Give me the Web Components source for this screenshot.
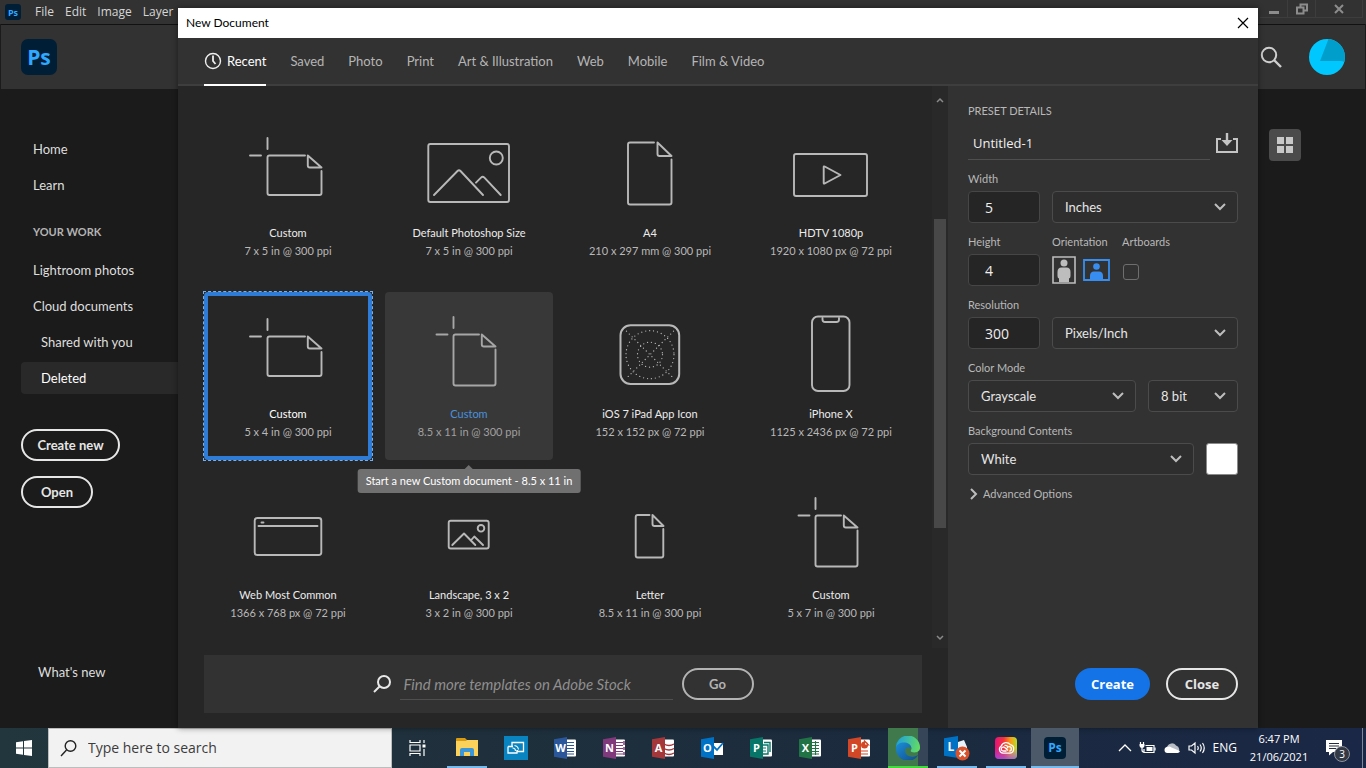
<!DOCTYPE html>
<html lang="en">
<head>
<meta charset="utf-8">
<title>New Document</title>
<style>
html, body { margin: 0; height: 100%; }
body { background: #1b1b1b; font-family: Lato, "Open Sans", sans-serif; overflow: hidden; }
</style>
</head>
<body>
<desktop-screen>
  <home-window>
    <menu-bar slot="menu"></menu-bar>
  </home-window>
  <new-document-dialog slot="dialog"></new-document-dialog>
  <task-bar slot="taskbar"></task-bar>
</desktop-screen>

<script>
const define = (name, html, setup) => {
  const template = document.createElement('template');
  template.innerHTML = html;
  customElements.define(name, class extends HTMLElement {
    connectedCallback() {
      if (this.shadowRoot) return;
      const root = this.attachShadow({ mode: 'open' });
      root.append(template.content.cloneNode(true));
      if (setup) setup(root, this);
    }
  });
};

/* ---------- small shared parts ---------- */

define('ps-logo', `
<style>
  :host { display: grid; place-items: center; flex: none; width: 36px; height: 36px; border-radius: 7px;
    background: #001e36; color: #31a8ff; font: 700 21px/1 "Open Sans", sans-serif; }
  :host([small]) { width: 16px; height: 16px; border-radius: 3px; font-size: 9px; }
  :host([medium]) { width: 22px; height: 22px; border-radius: 4px; font-size: 12px; }
</style>
<span>Ps</span>`);

define('pill-button', `
<style>
  :host { display: inline-block; flex: none; }
  button { box-sizing: border-box; width: 100%; height: 32px; padding: 0 14px; border: 2px solid #e6e6e6; border-radius: 16px;
    background: transparent; color: #e6e6e6; font: 700 13px/16px Lato, sans-serif; }
  :host([wide]) button { font-family: "Open Sans", sans-serif; }
  :host([primary]) button { border-color: #1473e6; background: #1473e6; color: #fff; }
  :host([quiet]) button { border-color: #b3b3b3; color: #b3b3b3; }
</style>
<button type="button"><slot></slot></button>`);

/* ---------- desktop ---------- */

define('desktop-screen', `
<style>
  :host { display: grid; grid-template-rows: minmax(0, 1fr) 40px; height: 100vh; }
  .stage { position: relative; display: grid; min-height: 0; }
  .dialog { position: absolute; inset: 8px 108px 0 178px; display: grid; }
  .stage, .dialog { grid-template-columns: minmax(0, 1fr); grid-template-rows: minmax(0, 1fr); }
</style>
<div class="stage">
  <slot></slot>
  <div class="dialog"><slot name="dialog"></slot></div>
</div>
<slot name="taskbar"></slot>`);

/* ---------- Photoshop window behind the dialog ---------- */

define('menu-bar', `
<style>
  :host { display: flex; justify-content: space-between; height: 24px; background: #323232; }
  nav { display: flex; align-items: center; gap: 11px; padding-left: 5px; }
  ps-logo { margin-right: 3px; }
  button { padding: 0; border: 0; background: none; color: #d6d6d6; font: 12px/16px "Open Sans", sans-serif; }
  .controls { display: flex; height: 18px; padding-right: 3px; }
  .controls button { display: grid; place-items: center; box-sizing: border-box; width: 28px; border: 1px solid #3d3d3d; border-width: 0 1px 1px 0; }
  .controls .close { width: 47px; }
  svg { fill: none; stroke: #8c8c8c; stroke-width: 2; }
</style>
<nav aria-label="Menu">
  <ps-logo small></ps-logo>
  <button>File</button><button>Edit</button><button>Image</button><button>Layer</button>
</nav>
<div class="controls">
  <button aria-label="Minimise"><svg width="12" height="12"><path d="M1 9.500h10" stroke-width="3"/></svg></button>
  <button aria-label="Restore"><svg width="12" height="12"><path d="M4.500 4V1.500h6.500v6H8.500M1 4.500h6.500v6H1z"/></svg></button>
  <button class="close" aria-label="Close"><svg width="12" height="12"><path d="M2 2l8 8M10 2l-8 8"/></svg></button>
</div>`);

define('home-window', `
<style>
  :host { display: flex; flex-direction: column; min-height: 0; background: #1b1b1b; }
  header { display: flex; align-items: center; justify-content: space-between; box-sizing: border-box; height: 65px;
    margin: 0 1px; padding: 0 20px; border-top: 1px solid #111; background: #323232; }
  .tools { display: flex; align-items: center; gap: 27px; }
  .tools button, .view { padding: 0; border: 0; background: none; display: grid; place-items: center; }
  .body { flex: 1; display: flex; justify-content: space-between; min-height: 0; }
  aside { display: flex; flex-direction: column; align-items: flex-start; box-sizing: border-box; width: 200px; padding: 44px 0 40px 21px; }
  nav { display: flex; flex-direction: column; gap: 4px; align-self: stretch; margin-bottom: 35px; }
  a { display: block; padding: 0 12px; border-radius: 4px; color: #dedede; font-size: 13px; line-height: 32px; text-decoration: none; }
  a.sub { padding-left: 20px; }
  a.on { background: #292929; color: #fff; }
  h2 { margin: 17px 0 8px; padding-left: 12px; color: #b4b4b4; font-size: 11px; line-height: 20px; font-weight: 700; }
  .new { width: 99px; margin-bottom: 15px; }
  .open { width: 72px; }
  .news { margin-top: auto; padding-left: 17px; }
  .view { width: 32px; height: 32px; margin: 40px 65px 0 0; border-radius: 4px; background: #4b4b4b; }
</style>
<slot name="menu"></slot>
<header>
  <ps-logo></ps-logo>
  <div class="tools">
    <button aria-label="Search"><svg width="22" height="22" fill="none" stroke="#cfcfcf" stroke-width="2"><circle cx="9" cy="9" r="7.200"/><path d="M14 14l7 7" stroke-width="2.400"/></svg></button>
    <button aria-label="Account"><svg width="36" height="36" viewBox="0 0 36 36"><circle cx="18" cy="18" r="18" fill="#00c8ff"/><path d="M19.500 0A18 18 0 0 1 35.200 23Q34 22 31 22H11z" fill="#009fcb"/></svg></button>
  </div>
</header>
<div class="body">
  <aside>
    <nav aria-label="Home">
      <a href="#home">Home</a><a href="#learn">Learn</a>
      <h2>YOUR WORK</h2>
      <a href="#lightroom">Lightroom photos</a><a href="#cloud">Cloud documents</a>
      <a href="#shared" class="sub">Shared with you</a><a href="#deleted" class="sub on">Deleted</a>
    </nav>
    <pill-button class="new">Create new</pill-button>
    <pill-button class="open">Open</pill-button>
    <a href="#news" class="news">What's new</a>
  </aside>
  <button class="view" aria-label="Grid view"><svg width="16" height="16" fill="#c8c8c8"><path d="M0 0h7v7H0zM9 0h7v7H9zM0 9h7v7H0zM9 9h7v7H9z"/></svg></button>
</div>`);

/* ---------- dialog ---------- */

define('new-document-dialog', `
<style>
  :host { display: flex; flex-direction: column; min-height: 0; background: #262626; box-shadow: 0 0 6px rgba(0,0,0,.45); }
  .title { display: flex; align-items: center; justify-content: space-between; flex: none; height: 30px; padding: 0 8px; background: #fff; color: #000; }
  h1 { margin: 0; font-size: 12px; line-height: 16px; font-weight: 400; }
  .title button { display: grid; place-items: center; padding: 0; border: 0; background: none; }
  .content { flex: 1; display: grid; grid-template-columns: minmax(0, 1fr) 310px; min-height: 0; }
  .left { display: flex; flex-direction: column; min-height: 0; }
</style>
<div class="title"><h1>New Document</h1>
  <button aria-label="Close dialog"><svg width="14" height="14" fill="none" stroke="#000" stroke-width="1.200"><path d="M2 2l10 10M12 2L2 12"/></svg></button></div>
<category-tabs></category-tabs>
<div class="content">
  <div class="left">
    <preset-list></preset-list>
    <stock-search></stock-search>
  </div>
  <preset-details></preset-details>
</div>`);

define('category-tabs', `
<style>
  :host { display: flex; gap: 24px; box-sizing: border-box; flex: none; height: 48px; padding: 0 26px; background: #323232;
    box-shadow: inset 0 -2px #3e3e3e; }
  button { display: flex; align-items: center; gap: 5px; padding: 0; border: 0; border-bottom: 2px solid transparent; background: none;
    color: #b5b5b5; font: 13px/18px Lato, sans-serif; white-space: nowrap; }
  button[aria-selected=true] { border-color: #fff; color: #fff; }
</style>
<button role="tab" aria-selected="true"><svg width="18" height="18" fill="none" stroke="#eee" stroke-width="1.400"><circle cx="9" cy="9" r="7.500"/><path d="M9 3.500V9l2.500 3" stroke-width="1.800"/></svg>Recent</button>
<button role="tab">Saved</button><button role="tab">Photo</button><button role="tab">Print</button>
<button role="tab">Art &amp; Illustration</button><button role="tab">Web</button><button role="tab">Mobile</button><button role="tab">Film &amp; Video</button>`);

const PICTOGRAMS = {
  'crop-wide': '<path d="M29.500 9v11M12 26.500h11M67 26.500H31.500q-2 0-2 2v35.500q0 2 2 2h50q2 0 2-2V42M69.800 26.500v10q0 2 2 2H83.500z"/>',
  'crop-tall': '<path d="M34.500 7v11M17.500 24.500h11M60 24.500H36.500q-2 0-2 2v47q0 2 2 2h38q2 0 2-2V39.500M62.800 24.500v10q0 2 2 2H76.500z"/>',
  picture: '<rect x="9.300" y="15" width="80.700" height="58" rx="2"/><circle cx="77.300" cy="29" r="6.500"/><path d="M15 66l23.500-24q1.500-1.500 3 0L64 66M57 53.700l5-5q1.700-1.700 3.400 0L81.700 66"/>',
  page: '<path d="M54 13.500H30q-2 0-2 2v58q0 2 2 2h39.500q2 0 2-2V30.500M57.500 13.500v11.500q0 2 2 2h12z"/>',
  video: '<rect x="13" y="25" width="73" height="42" rx="2"/><path d="M42.700 38v16q0 1 1 .5L59.500 46 43.700 37.500q-1-.5-1 .5z"/>',
  appicon: '<rect x="20.500" y="15.300" width="58.700" height="58.700" rx="10" stroke-width="2"/><g stroke-width="1.300" stroke-dasharray="0 4"><circle cx="50" cy="44.700" r="24"/><circle cx="50" cy="44.700" r="12.500"/><path d="M26.500 21.200l47 47M73.500 21.200l-47 47"/></g>',
  phone: '<rect x="31" y="6.500" width="37.500" height="74.500" rx="6"/><path d="M41.500 8v1.500q0 2.500 2.500 2.500h11.500q2.500 0 2.500-2.500V8"/>',
  browser: '<rect x="16.700" y="27" width="66.600" height="37" rx="2.500"/><path d="M20.500 35h59M23.500 31.500h2"/>',
  'picture-small': '<rect x="29.700" y="29.700" width="40" height="27.800" rx="2"/><circle cx="62" cy="37.300" r="3.300"/><path d="M33.300 54L45 42.500 56.300 54M52.700 48.500l2.600-3L64 54"/>',
  'page-small': '<path d="M49.500 24H37.700q-2 0-2 2v38.500q0 2 2 2h23.600q2 0 2-2V38M52.500 24v9q0 2 2 2h9z"/>'
};

define('preset-tile', `
<style>
  :host { display: block; position: relative; }
  button { display: flex; flex-direction: column; align-items: center; box-sizing: border-box; width: 100%; aspect-ratio: 1; padding: 18px 0 0;
    border: 0; border-radius: 4px; background: none; color: #b8b8b8; font: 11px/18px Lato, sans-serif; }
  svg { display: block; flex: none; width: 100px; height: 92px; margin-bottom: 3px; fill: none; stroke: #b8b8b8; stroke-width: 1.900; stroke-linecap: round; stroke-linejoin: round; }
  .name { color: #ececec; }
  :host([selected]) { outline: 1px dashed #79aee8; }
  :host([selected]) button { border: 4px solid #2e7cd6; padding-top: 14px; }
  :host([selected]) .name { color: #fff; }
  :host([hovered]) button { background: #383838; color: #a0a0a0; }
  :host([hovered]) svg { stroke: #a6a6a6; }
  :host([hovered]) .name { color: #4a90dc; }
  ::slotted([slot=tip]) { position: absolute; z-index: 1; top: calc(100% + 9px); left: 50%; transform: translateX(-50%); }
</style>
<button type="button"><svg viewBox="0 0 100 92" aria-hidden="true"></svg><span class="name"><slot name="name"></slot></span><span><slot></slot></span></button>
<slot name="tip"></slot>`,
(root, host) => { root.querySelector('svg').innerHTML = PICTOGRAMS[host.getAttribute('icon')]; });

define('tool-tip', `
<style>
  :host { display: block; padding: 0 8px; border-radius: 3px; background: #707070; color: #fff; font-size: 11px; line-height: 24px; white-space: nowrap; }
  :host::before { content: ""; position: absolute; left: 50%; bottom: 100%; margin-left: -4px; border: 4px solid transparent; border-top: 0; border-bottom-color: #707070; }
</style>
<slot></slot>`);

define('preset-list', `
<style>
  :host { flex: 1; display: grid; grid-template-columns: minmax(0, 1fr) 16px; min-height: 0; }
  .grid { display: grid; grid-template-columns: repeat(4, minmax(0, 1fr)); gap: 13px; align-content: start; padding: 25px 17px 0 26px; }
  .scroll { display: grid; grid-template-rows: 20px 109fr 309fr 100fr 20px; justify-items: center; background: #292929; padding-top: 4px; }
  .thumb { grid-row: 3; width: 12px; background: #484848; }
  svg { fill: none; stroke: #8a8a8a; stroke-width: 1.500; align-self: center; }
  svg:last-child { grid-row: 5; }
</style>
<div class="grid">
  <preset-tile icon="crop-wide"><span slot="name">Custom</span>7 x 5 in @ 300 ppi</preset-tile>
  <preset-tile icon="picture"><span slot="name">Default Photoshop Size</span>7 x 5 in @ 300 ppi</preset-tile>
  <preset-tile icon="page"><span slot="name">A4</span>210 x 297 mm @ 300 ppi</preset-tile>
  <preset-tile icon="video"><span slot="name">HDTV 1080p</span>1920 x 1080 px @ 72 ppi</preset-tile>
  <preset-tile icon="crop-wide" selected><span slot="name">Custom</span>5 x 4 in @ 300 ppi</preset-tile>
  <preset-tile icon="crop-tall" hovered><span slot="name">Custom</span>8.5 x 11 in @ 300 ppi<tool-tip slot="tip">Start a new Custom document - 8.5 x 11 in</tool-tip></preset-tile>
  <preset-tile icon="appicon"><span slot="name">iOS 7 iPad App Icon</span>152 x 152 px @ 72 ppi</preset-tile>
  <preset-tile icon="phone"><span slot="name">iPhone X</span>1125 x 2436 px @ 72 ppi</preset-tile>
  <preset-tile icon="browser"><span slot="name">Web Most Common</span>1366 x 768 px @ 72 ppi</preset-tile>
  <preset-tile icon="picture-small"><span slot="name">Landscape, 3 x 2</span>3 x 2 in @ 300 ppi</preset-tile>
  <preset-tile icon="page-small"><span slot="name">Letter</span>8.5 x 11 in @ 300 ppi</preset-tile>
  <preset-tile icon="crop-tall"><span slot="name">Custom</span>5 x 7 in @ 300 ppi</preset-tile>
</div>
<div class="scroll" aria-hidden="true">
  <svg width="8" height="6"><path d="M1 5l3-3 3 3"/></svg><div class="thumb"></div><svg width="8" height="6"><path d="M1 1l3 3 3-3"/></svg>
</div>`);

define('stock-search', `
<style>
  :host { display: block; flex: none; padding: 7px 26px 15px; }
  form { display: flex; align-items: center; justify-content: center; gap: 9px; height: 58px; background: #323232; }
  svg { fill: none; stroke: #e8e8e8; stroke-width: 2; }
  input { box-sizing: border-box; width: 273px; height: 32px; padding: 0 4px; border: 0; border-bottom: 1px solid #4f4f4f; background: none;
    font: italic 15px/18px Lato, sans-serif; outline: 0; }
  input::placeholder { color: #8f8f8f; opacity: 1; }
  pill-button { width: 72px; }
</style>
<form>
  <svg width="18" height="18" aria-hidden="true"><circle cx="11" cy="7" r="6"/><path d="M7 11l-6 6"/></svg>
  <input aria-label="Find more templates on Adobe Stock" placeholder="Find more templates on Adobe Stock">
  <pill-button quiet>Go</pill-button>
</form>`);

define('preset-details', `
<style>
  :host { display: flex; flex-direction: column; box-sizing: border-box; padding: 16px 20px 28px; background: #323232; color: #b8b8b8; font-size: 11px; }
  h2 { margin: 0 0 7px; font-size: 11px; line-height: 18px; font-weight: 400; }
  form { display: flex; flex-direction: column; gap: 11px; }
  .name { display: flex; align-items: center; gap: 6px; }
  .name input { flex: 1; min-width: 0; height: 33px; padding: 0 5px; border: 0; border-bottom: 1px solid #4f4f4f; background: none; font-size: 13px; }
  .row { display: grid; grid-template-columns: 72px minmax(0, 1fr); gap: 4px 12px; }
  .row.mode { grid-template-columns: minmax(0, 1fr) 90px; }
  .row.back { grid-template-columns: minmax(0, 1fr) 32px; }
  .row.size { grid-template-columns: 72px 58px minmax(0, 1fr); }
  label, .caption { line-height: 16px; white-space: nowrap; }
  .wide { grid-column: 1 / -1; }
  input { box-sizing: border-box; color: #efefef; font: 14px/18px "Open Sans", sans-serif; outline: 0; }
  .num { width: 100%; height: 32px; padding: 0 16px; border: 1px solid #464646; border-radius: 4px; background: #252525; }
  .pick { display: grid; grid-template: 32px / minmax(0, 1fr) 36px; align-items: center; }
  select { grid-area: 1 / 1 / 2 / 3; appearance: none; box-sizing: border-box; width: 100%; height: 32px; padding: 0 36px 0 12px; border: 1px solid #4b4b4b;
    border-radius: 4px; background: #2e2e2e; color: #e6e6e6; font: 13px/18px Lato, sans-serif; outline: 0; }
  .pick svg { grid-area: 1 / 2; justify-self: center; pointer-events: none; fill: none; stroke: #bdbdbd; stroke-width: 2; }
  .orient { display: flex; align-items: center; gap: 7px; height: 32px; margin-right: -8px; }
  .icon { display: block; flex: none; padding: 0; border: 0; background: none; }
  .icon svg { display: block; }
  .box { align-self: center; appearance: none; width: 16px; height: 16px; margin: 4px 0 0 1px; border: 1px solid #6e6e6e; border-radius: 3px; }
  .swatch { height: 32px; padding: 0; border: 1px solid #8a8a8a; border-radius: 3px; background: #fff; }
  .more { display: flex; align-items: center; gap: 5px; padding: 0; border: 0; background: none; color: #b8b8b8; font: 11px/16px Lato, sans-serif; }
  .actions { display: flex; justify-content: flex-end; gap: 16px; margin-top: auto; }
  .create { width: 75px; } .close { width: 72px; }
</style>
<h2>PRESET DETAILS</h2>
<form>
  <div class="name">
    <input aria-label="Document name" value="Untitled-1">
    <button type="button" class="icon" aria-label="Save preset"><svg width="22" height="21" fill="none" stroke="#c4c4c4" stroke-width="2"><path d="M5 6H1v13h20V6h-4"/><path d="M11 0v8" stroke-width="2.400"/><path d="M5.500 7h11L11 13z" fill="#c4c4c4" stroke="none"/></svg></button>
  </div>
  <div class="row">
    <label for="w" class="wide">Width</label>
    <input id="w" class="num" value="5">
    <div class="pick"><select aria-label="Units"><option>Inches</option></select><svg width="12" height="8"><path d="M1 1l5 5 5-5"/></svg></div>
  </div>
  <div class="row size">
    <label for="h">Height</label><span class="caption">Orientation</span><label for="ab">Artboards</label>
    <input id="h" class="num" value="4">
    <div class="orient">
      <button type="button" class="icon" aria-label="Portrait"><svg width="24" height="28"><path d="M1 1h22v26H1z" fill="none" stroke="#bdbdbd" stroke-width="1.600"/><circle cx="12" cy="7" r="3.500" fill="#bdbdbd"/><path d="M5.500 16q0-4.500 4-4.500h5q4 0 4 4.500v4q0 2-1.500 2.500V26H7v-3.500Q5.500 22 5.500 20z" fill="#bdbdbd"/></svg></button>
      <button type="button" class="icon" aria-label="Landscape"><svg width="27" height="22"><path d="M1 1h25v20H1z" fill="none" stroke="#378ef0" stroke-width="1.800"/><circle cx="13.500" cy="7.500" r="3.300" fill="#378ef0"/><path d="M7 21v-4q0-4.500 4-4.500h5q4 0 4 4.500v4z" fill="#378ef0"/></svg></button>
    </div>
    <input id="ab" type="checkbox" class="box">
  </div>
  <div class="row">
    <label for="r" class="wide">Resolution</label>
    <input id="r" class="num" value="300">
    <div class="pick"><select aria-label="Resolution units"><option>Pixels/Inch</option></select><svg width="12" height="8"><path d="M1 1l5 5 5-5"/></svg></div>
  </div>
  <div class="row mode">
    <label for="m" class="wide">Color Mode</label>
    <div class="pick"><select id="m"><option>Grayscale</option></select><svg width="12" height="8"><path d="M1 1l5 5 5-5"/></svg></div>
    <div class="pick"><select aria-label="Bit depth"><option>8 bit</option></select><svg width="12" height="8"><path d="M1 1l5 5 5-5"/></svg></div>
  </div>
  <div class="row back">
    <label for="b" class="wide">Background Contents</label>
    <div class="pick"><select id="b"><option>White</option></select><svg width="12" height="8"><path d="M1 1l5 5 5-5"/></svg></div>
    <button type="button" class="swatch" aria-label="Background colour"></button>
  </div>
  <button type="button" class="more"><svg width="10" height="12" fill="none" stroke="#bdbdbd" stroke-width="2"><path d="M3 1l5 5-5 5"/></svg>Advanced Options</button>
</form>
<div class="actions">
  <pill-button class="create" primary wide>Create</pill-button>
  <pill-button class="close" wide>Close</pill-button>
</div>`);

/* ---------- Windows taskbar ---------- */

const book = (letter, colour, page) => `<svg width="24" height="24" viewBox="0 0 24 24"><path d="M12 3.500h10q1 0 1 1v15q0 1-1 1H12z" fill="#fff"/>${page}<path d="M1 3.300L14 1v22L1 20.700z" fill="${colour}"/><text x="7.500" y="16" text-anchor="middle" font-family="Open Sans" font-size="11" font-weight="700" fill="#fff">${letter}</text></svg>`;
const lines = c => `<path d="M13 6.500h8M13 9.500h8M13 12.500h8M13 15.500h8M13 18h8" stroke="${c}" stroke-width="1.200"/>`;
const APPS = {
  taskview: '<svg width="18" height="16" fill="none" stroke="#fff" stroke-width="1.200"><path d="M1 0v2.500h10V0M1 5h10v6H1zM1 16v-2.500h10V16M15 0v3M15 9v7"/><path d="M13.500 4.500h3v3h-3z" fill="#fff" stroke="none"/></svg>',
  explorer: '<svg width="22" height="20"><path d="M0 1q0-1 1-1h8l2 2v3H0z" fill="#d99b12"/><path d="M0 3h10l1-1h11v16H0z" fill="#fbd15b"/><path d="M4 18v-6q0-2 2-2h10q2 0 2 2v6h-4v-4H8v4z" fill="#3a96d8"/></svg>',
  connect: '<svg width="24" height="24"><path d="M0 0h24v24H0z" fill="#0a84c0"/><path d="M8 10V6.500h11.500v9H13M4 10.500h5M4 10.500v6.500h9v-3" fill="none" stroke="#fff" stroke-width="1.300"/><path d="M8.500 12q3 0 3 3M10.500 9.500q3.500.5 4 4M14 15.500l-1-1" fill="none" stroke="#fff" stroke-width="1.100"/></svg>',
  word: book('W', '#2b579a', lines('#2b579a')),
  onenote: book('N', '#80397b', lines('#80397b') + '<path d="M22 5v4M22 11v3M22 16v3" stroke="#80397b" stroke-width="1.500"/>'),
  access: book('A', '#a4373a', '<path d="M13 8q5 3 10 0M13 12.500q5 3 10 0M13 17q5 3 10 0" fill="none" stroke="#a4373a" stroke-width="1.400"/>'),
  outlook: '<svg width="24" height="24"><path d="M12 7h11v12H12z" fill="#fff"/><path d="M12 9l5 5 6-7" fill="none" stroke="#0072c6" stroke-width="1.800"/><path d="M1 3.300L14 1v22L1 20.700z" fill="#0072c6"/><text x="7.500" y="16" text-anchor="middle" font-family="Open Sans" font-size="11" font-weight="700" fill="#fff">O</text></svg>',
  publisher: book('P', '#077568', '<path d="M13 9h6v9h-6M15 6.500h6V16" fill="none" stroke="#077568" stroke-width="1.400"/><path d="M13 12h4M13 15h4" stroke="#077568"/>'),
  excel: book('X', '#217346', '<path d="M13 6.500h8M13 9.500h8M13 12.500h8M13 15.500h8M13 18h8M17.500 5v14" stroke="#217346" stroke-width="1.100"/>'),
  powerpoint: book('P', '#d24726', '<circle cx="17.500" cy="9" r="3.500" fill="#d24726"/><path d="M17.500 9V5l4 4zM14 15h7M14 18h7" fill="#fff" stroke="#d24726" stroke-width="1.200"/>'),
  edge: '<svg width="24" height="24" viewBox="0 0 24 24"><defs><linearGradient id="g" x1="0" y1=".3" x2="1" y2=".5"><stop stop-color="#1d9fe0"/><stop offset="1" stop-color="#62dc63"/></linearGradient><linearGradient id="b" x1="0" y1="0" x2="1" y2="1"><stop stop-color="#1b8fd8"/><stop offset="1" stop-color="#114a8b"/></linearGradient></defs><path d="M0 12A12 12 0 0 1 24 11c.4 4-2.600 5.500-5.500 5.500-3 0-4.500-1-3.500-2.500C17 10.500 13 8 10 8 5 8 1 11 0 12z" fill="url(#g)"/><path d="M0 12C0 8 5 6 9.500 6.500 13 7 15.500 9.500 15 12c-3-2-6 0-6 3 0 4 5 6.500 9 5.500 2-.4 3-1 4.500-1.800A12 12 0 0 1 0 12z" fill="url(#b)"/></svg>',
  lync: '<svg width="26" height="26" viewBox="0 0 26 26"><path d="M11 4l3 3 6-2 3 7v9H11z" fill="#e9f2fa"/><path d="M0 3.300L14 1v22L0 20.700z" fill="#0072c6"/><text x="7" y="16" text-anchor="middle" font-family="Open Sans" font-size="12" font-weight="700" fill="#fff">L</text><circle cx="18.500" cy="18.500" r="7" fill="#d9532c"/><path d="M15.500 15.500l6 6M21.500 15.500l-6 6" stroke="#fff" stroke-width="2"/></svg>',
  cloud: '<svg width="22" height="22"><defs><linearGradient id="c"><stop stop-color="#e5127d"/><stop offset=".4" stop-color="#f5333a"/><stop offset=".7" stop-color="#fb9a14"/><stop offset="1" stop-color="#b5e02c"/></linearGradient><linearGradient id="d" x1="0" y1="0" x2="0" y2="1"><stop offset=".5" stop-color="#a64dff" stop-opacity="0"/><stop offset="1" stop-color="#8a55ff" stop-opacity=".7"/></linearGradient></defs><rect width="22" height="22" rx="4" fill="url(#c)"/><rect width="22" height="22" rx="4" fill="url(#d)"/><g fill="none" stroke="#fff" stroke-width="1.300"><path d="M8 16.200h6.500a4.300 4.300 0 0 0 .8-8.500A5.200 5.200 0 0 0 6.300 9 3.900 3.900 0 0 0 8 16.200z"/><path d="M11.500 14H8.300a2 2 0 1 1 1.400-3.400l3.300 3M9.500 8.500q1.800-.5 3.200 1M12 11.500a2.200 2.200 0 1 1 2.300 2.600"/></g></svg>',
  photoshop: '<ps-logo medium></ps-logo>'
};

define('task-button', `
<style>
  :host { display: block; flex: none; width: 48px; height: 40px; }
  button { position: relative; display: grid; place-items: center; width: 100%; height: 40px; padding: 0; border: 0; background: none; }
  :host([running]) button::after { content: ""; position: absolute; inset: auto 4px 0; height: 2px; background: #76b9ed; }
  :host([active]) button { background: #4b5969; }
  :host([active]) button::after { inset: auto 0 0; }
  :host([busy]) button { background: linear-gradient(90deg, transparent 4px, #40794c 4px 34px, #364557 34px 44px, transparent 44px); }
  :host([busy]) button::after { background: #43d83c; }
</style>
<button type="button"></button>`,
(root, host) => {
  const app = host.getAttribute('app');
  const button = root.querySelector('button');
  button.setAttribute('aria-label', app);
  button.innerHTML = APPS[app];
});

define('task-bar', `
<style>
  :host { display: flex; align-items: center; height: 40px; background: linear-gradient(90deg, #22363e, #1f303c 35%, #1b2b3e 65%, #1a2746); color: #fff; font-family: "Open Sans", sans-serif; }
  button { padding: 0; border: 0; background: none; color: inherit; }
  .start { display: grid; place-items: center; width: 48px; height: 40px; }
  label { display: flex; align-items: center; gap: 10px; box-sizing: border-box; width: 344px; height: 40px; padding: 0 11px; border: 1px solid #bdbdbd; background: #f2f2f2; }
  input { flex: 1; min-width: 0; padding: 0 1px; border: 0; background: none; font: 14px/20px "Open Sans", sans-serif; outline: 0; }
  input::placeholder { color: #3c3c3c; opacity: 1; }
  .apps { display: flex; gap: 1px; flex: 1; padding-left: 2px; }
  .tray { display: flex; align-items: center; gap: 7px; font-size: 12px; line-height: 18px; }
  .tray svg { display: block; flex: none; }
  .clock { width: 64px; margin-left: 3px; font-size: 11px; text-align: center; }
  .notes { position: relative; margin: 0 20px 0 8px; }
  .badge { position: absolute; left: 8px; top: 6px; display: grid; place-items: center; box-sizing: border-box; width: 16px; height: 16px; border: 1px solid #8d939c; border-radius: 50%; background: #333a46; font: 10px/12px "Open Sans", sans-serif; }
  .peek { width: 3px; height: 40px; border-left: 1px solid #7d8896; }
</style>
<button class="start" aria-label="Start"><svg width="16" height="16" fill="#fff"><path d="M0 2.200L7 1.200V7.500H0zM8 1.100L16 0v7.500H8zM0 8.500h7v6.300L0 13.800zM8 8.500h8V16l-8-1.100z"/></svg></button>
<label><svg width="17" height="17" fill="none" stroke="#222" stroke-width="1.400" aria-hidden="true"><circle cx="10.500" cy="6" r="5.300"/><path d="M6.500 10L1 16"/></svg><input aria-label="Search" placeholder="Type here to search"></label>
<div class="apps">
  <task-button app="taskview"></task-button><task-button app="explorer" running></task-button><task-button app="connect"></task-button>
  <task-button app="word"></task-button><task-button app="onenote"></task-button><task-button app="access"></task-button>
  <task-button app="outlook"></task-button><task-button app="publisher"></task-button><task-button app="excel"></task-button>
  <task-button app="powerpoint"></task-button><task-button app="edge" running busy></task-button><task-button app="lync" running></task-button>
  <task-button app="cloud" running></task-button><task-button app="photoshop" running active></task-button>
</div>
<div class="tray">
  <svg width="14" height="8" fill="none" stroke="#fff" stroke-width="1.300"><path d="M1 7l6-6 6 6"/></svg>
  <svg width="18" height="14" fill="none" stroke="#fff" stroke-width="1.200"><path d="M6.500 4.500H15v7H5V8"/><path d="M7.500 6h6v4h-6z" fill="#fff" stroke="none"/><path d="M16 6.500v3M1.500 1v2M4.500 1v2M3 6.500V9q0 2 2 2"/><path d="M.5 3h5v2Q5 7 3 7T.5 5z" fill="#fff" stroke="none"/></svg>
  <svg width="17" height="12"><path d="M4 11a4 4 0 0 1-.5-7A5 5 0 0 1 12 3.500 4 4 0 0 1 13 11z" fill="#b9bec6"/><path d="M3.500 11a3 3 0 0 1 0-6q2-1 4 .5L16 9q-.5 2-2.500 2z" fill="#fff"/></svg>
  <svg width="18" height="14" fill="none" stroke="#fff" stroke-width="1.200"><path d="M1 5h2.500L7 2v10L3.500 9H1zM9.500 5q1.500 2 0 4M12 3.500q2.500 3.500 0 7M14.500 2q3.500 5 0 10"/></svg>
  <span>ENG</span>
  <time class="clock">6:47 PM<br>21/06/2021</time>
  <button class="notes" aria-label="Notifications"><svg width="16" height="16" fill="#fff"><path d="M0 0h16v12H7l-4 3.500V12H0z"/><path d="M3 3.500h10M3 6h10M3 8.500h7" stroke="#1f2c44"/></svg><span class="badge">3</span></button>
</div>
<div class="peek"></div>`);
</script>
</body>
</html>
